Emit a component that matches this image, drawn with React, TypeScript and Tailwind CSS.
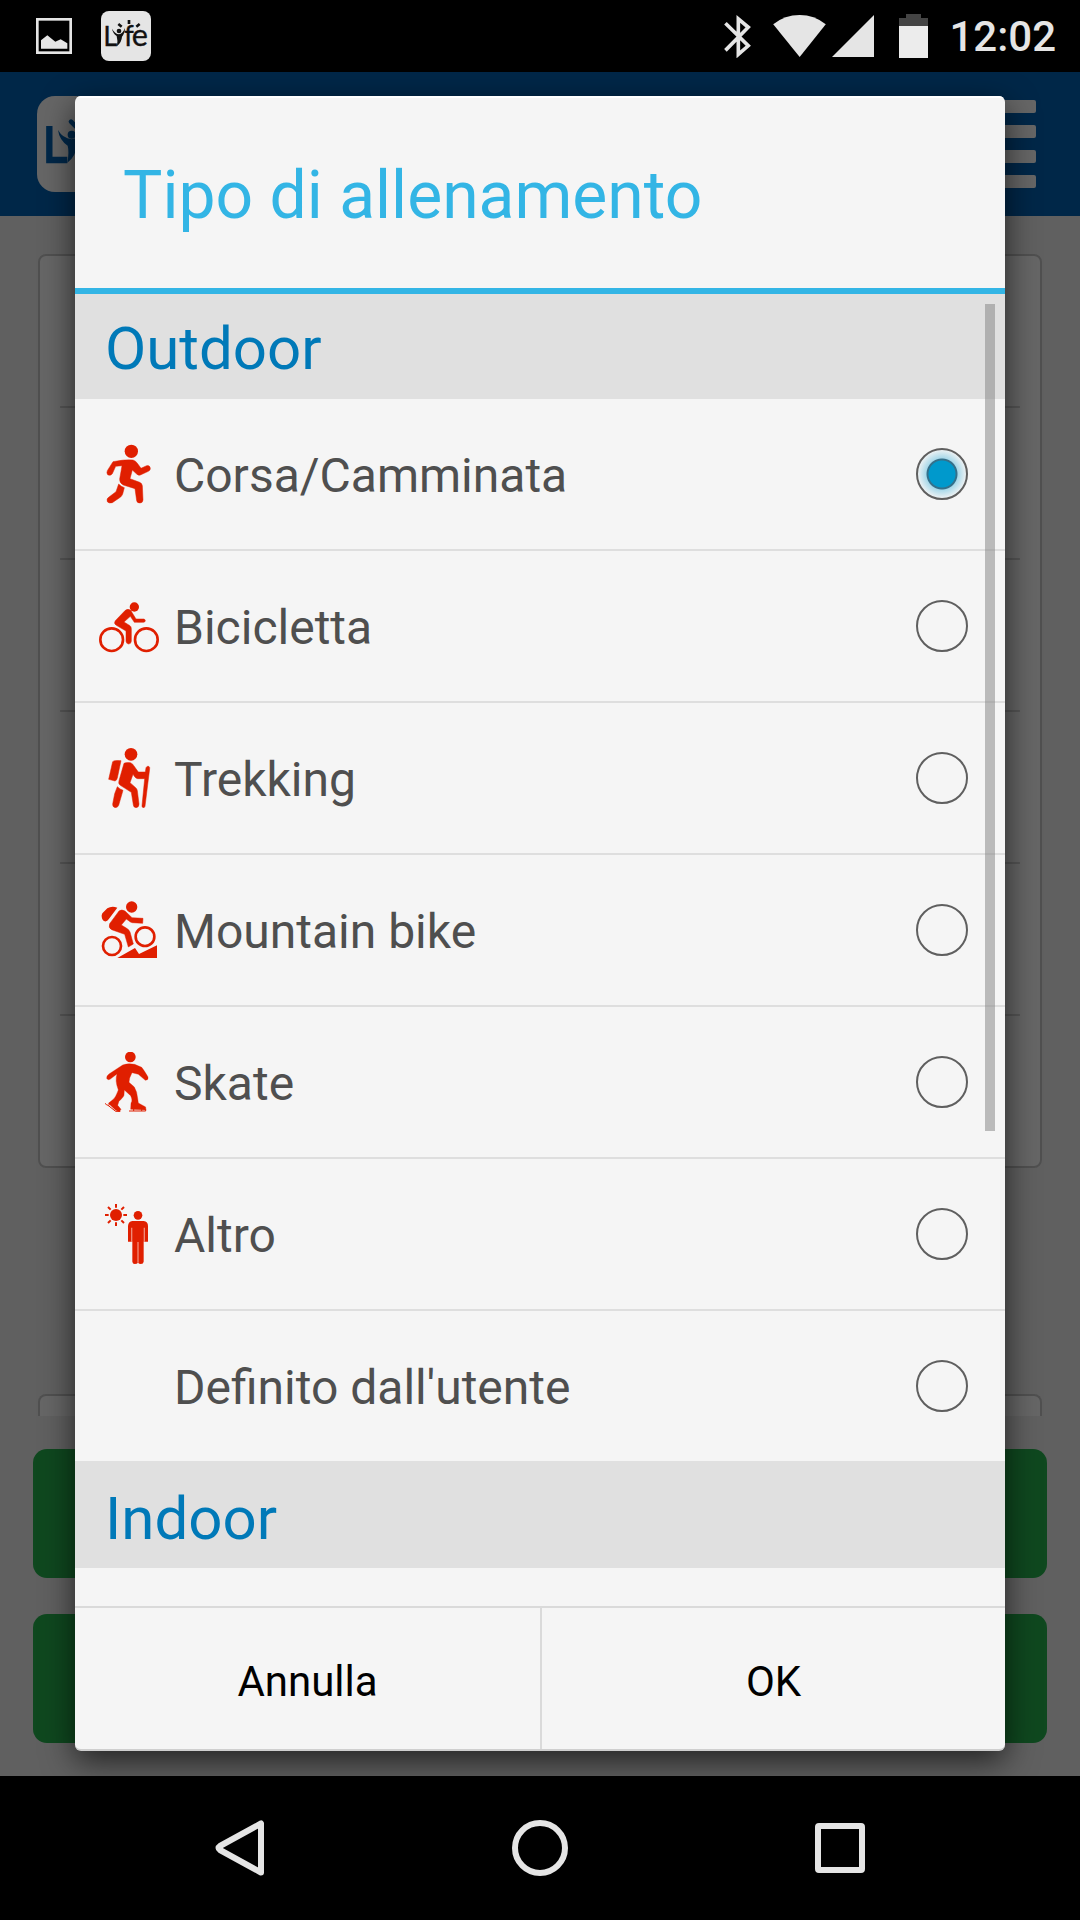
import React, { useState } from "react";

const RED = "#e01f00";

function RunIcon() {
  return (
    <svg className="size-[60px] shrink-0" viewBox="72 72 180 180" fill={RED} aria-hidden="true">
      <circle cx="169" cy="94" r="20" />
      <path d="M114 125 Q146 118 174 120 Q182 122 187 130 L198 145 L215 137 Q224 135 226 144 Q227 151 220 154 L196 165 Q190 167 185 162 L172 150 L165 176 L194 187 Q201 190 202 197 L204 240 Q203 249 195 249 Q186 249 185 242 L180 206 L145 195 Q133 189 134 177 L141 137 L122 139 L112 161 Q106 169 98 164 Q94 159 97 152 Z" stroke={RED} strokeWidth="1.500" strokeLinejoin="round" />
      <path d="M131 192 Q138 200 148 203 L143 222 Q141 227 137 231 L112 248 Q102 251 97 245 Q94 236 101 232 L123 215 Z" stroke={RED} strokeWidth="1.500" strokeLinejoin="round" />
    </svg>
  );
}

function BikeIcon() {
  return (
    <svg className="size-[60px] shrink-0" viewBox="72 528 180 180" fill={RED} aria-hidden="true">
      <circle cx="178" cy="561" r="14" />
      <circle cx="110" cy="659" r="34" fill="none" stroke={RED} strokeWidth="8" />
      <circle cx="214" cy="659" r="34" fill="none" stroke={RED} strokeWidth="8" />
      <path d="M151 571 Q159 565 167 571 L183 597 L206 597 Q211 598 211 602 Q211 606 206 607 L178 607 L166 589 L147 606 L165 617 Q169 620 169 626 L169 664 Q168 672 161 672 Q154 672 153 664 L153 633 L124 616 Q115 610 121 602 Z" stroke={RED} strokeWidth="1.500" />
    </svg>
  );
}

function TrekIcon() {
  return (
    <svg className="size-[60px] shrink-0" viewBox="72 84 180 180" fill={RED} aria-hidden="true">
      <circle cx="168" cy="103" r="19" />
      <path d="M113 125 Q118 120 138 122 L127 174 Q125 182 120 183 L101 178 Z" stroke={RED} strokeWidth="1.500" />
      <path d="M147 130 Q151 127 166 128 Q173 130 177 138 L190 156 L211 156 L213 143 Q216 137 221 139 Q225 141 224 146 L210 259 Q208 264 205 263 Q200 262 201 257 L209 176 L188 176 Q182 175 179 170 L174 163 L165 188 L182 203 Q186 206 187 212 L192 252 Q192 262 184 263 Q176 263 175 255 L169 217 L136 196 Q129 191 132 182 Z" stroke={RED} strokeWidth="1.500" />
      <path d="M127 200 Q135 208 144 211 L131 256 Q128 263 121 263 Q112 261 113 252 L119 221 Z" stroke={RED} strokeWidth="1.500" />
    </svg>
  );
}

function MountainBikeIcon() {
  return (
    <svg className="size-[60px] shrink-0" viewBox="72 540 180 180" fill={RED} aria-hidden="true">
      <circle cx="170" cy="561" r="17" />
      <circle cx="111" cy="678" r="27" fill="none" stroke={RED} strokeWidth="8" />
      <circle cx="210" cy="650" r="28" fill="none" stroke={RED} strokeWidth="8" />
      <path d="M82 580 L97 565 Q110 557 127 563 L101 598 Q97 605 89 604 Q79 600 80 586 Z" />
      <path d="M132 573 Q140 567 150 573 L171 593 L204 595 L203 610 L172 608 Q166 607 161 602 L154 597 L139 615 L155 625 Q162 629 165 636 L175 672 L160 681 L149 643 L110 629 Q99 623 104 611 Z" stroke={RED} strokeWidth="1.500" />
      <path d="M127 714 L180 684 L192 702 L246 676 L246 714 Z" />
    </svg>
  );
}

function SkateIcon() {
  return (
    <svg className="size-[60px] shrink-0" viewBox="72 66 180 180" fill={RED} aria-hidden="true">
      <circle cx="166" cy="81" r="16" />
      <path d="M143 105 Q160 98 179 103 L200 112 Q206 119 219 141 Q221 151 211 151 L190 133 L171 128 Q162 144 162 157 L178 171 Q187 186 188 205 L190 219 L212 231 L212 240 L167 238 L168 219 Q174 212 167 197 L148 180 L147 196 Q145 202 132 214 L128 226 L138 238 L133 245 L122 241 L100 220 L115 208 Q122 202 130 180 Q119 152 126 132 L105 148 Q98 152 95 145 Q94 137 102 132 Z" stroke={RED} strokeWidth="1" />
      <path d="M90 220 Q93 224 99 226 L122 244 L136 244 M162 243 L212 243 L212 236 M176 237 V243 M200 237 V243 M103 222 L101 227" fill="none" stroke={RED} strokeWidth="3" />
    </svg>
  );
}

function OtherIcon() {
  return (
    <svg className="size-[60px] shrink-0" viewBox="72 522 180 180" fill={RED} aria-hidden="true">
      <circle cx="123" cy="555" r="18" />
      <path d="M123 522V533M123 577V588M90 555H101M145 555H156M99 531L107 539M139 571L147 579M147 531L139 539M107 571L99 579" stroke={RED} strokeWidth="6" />
      <circle cx="189" cy="556" r="13" />
      <path d="M172 573 H206 Q219 574 219 588 V635 H206 V695 Q205 702 198 702 Q192 702 189 698 Q186 702 179 702 Q173 702 172 695 V635 H159 V588 Q160 574 172 573 Z" />
      <path d="M170 593V636M208 593V636M189 636V698" stroke="#f08a78" strokeWidth="4" />
    </svg>
  );
}

const SPORTS: { id: string; label: string; icon: React.ReactNode }[] = [
  { id: "run", label: "Corsa/Camminata", icon: <RunIcon /> },
  { id: "bike", label: "Bicicletta", icon: <BikeIcon /> },
  { id: "trek", label: "Trekking", icon: <TrekIcon /> },
  { id: "mtb", label: "Mountain bike", icon: <MountainBikeIcon /> },
  { id: "skate", label: "Skate", icon: <SkateIcon /> },
  { id: "other", label: "Altro", icon: <OtherIcon /> },
  { id: "custom", label: "Definito dall'utente", icon: <span className="size-[60px] shrink-0" /> },
];

function StatusBar() {
  return (
    <div className="flex h-[72px] shrink-0 items-center bg-black pr-6 pl-9 text-[#e5e5e5]">
      <svg className="size-9" viewBox="0 0 108 108" aria-hidden="true">
        <rect x="4" y="4" width="100" height="100" fill="none" stroke="#e5e5e5" strokeWidth="8" />
        <path d="M15 92 V67 L34 52 L58 71 L74 64 L94 76 V92 Z" fill="#e5e5e5" />
      </svg>
      <svg className="ml-[29px] size-[50px]" viewBox="303 33 150 150" role="img" aria-label="Lyfe">
        <rect x="303" y="33" width="150" height="150" rx="24" fill="#e5e5e5" />
        <g fill="#111" stroke="#111" strokeWidth="1" fontFamily="Lato, sans-serif">
          <text x="310" y="138" fontSize="82">L</text>
          <text x="372" y="138" fontSize="84">f</text>
          <text x="395" y="138" fontSize="92">e</text>
        </g>
        <circle cx="357" cy="93" r="7" fill="#111" />
        <path d="M336 86 Q345 102 357 103 Q368 101 375 84 Q374 101 366 110 Q365 127 351 138 Q354 122 350 108 Q339 101 336 86 Z" fill="#111" />
        <path d="M355 72L365 80M387 60V72M419 72L409 80" stroke="#111" strokeWidth="8" />
      </svg>
      <div className="ml-auto flex items-center">
        <svg className="h-[43px] w-[27px]" viewBox="71 44 81 130" aria-hidden="true">
          <path d="M75 69 L144 137 L114 163 V56 L144 81 L75 151" fill="none" stroke="#e5e5e5" strokeWidth="11" />
        </svg>
        <svg className="ml-[22px] h-[42px] w-[53px]" viewBox="219 43 159 127" aria-hidden="true">
          <path d="M219 71 Q254 43 299 43 Q343 43 378 71 L299 170 Z" fill="#e5e5e5" />
        </svg>
        <svg className="ml-1.5 h-[42px] w-[42px]" viewBox="0 0 42 42" aria-hidden="true">
          <path d="M42 0 V42 H0 Z" fill="#e5e5e5" />
        </svg>
        <svg className="ml-[25px] h-[44px] w-[29px]" viewBox="0 0 29 44" aria-hidden="true">
          <path d="M7 0 H22 V4 H29 V12 H0 V4 H7 Z" fill="#444" />
          <path d="M0 12 H29 V44 H0 Z" fill="#ececec" />
        </svg>
        <span className="ml-[21px] pt-0.5 text-[42px] leading-[48px] font-medium">12:02</span>
      </div>
    </div>
  );
}

function PageBehind() {
  return (
    <div className="flex flex-1 flex-col bg-[#f0f0f0]">
      <header className="flex h-36 items-center justify-between bg-[#0062b4] px-[37px]">
        <svg className="size-24" viewBox="111 288 288 288" role="img" aria-label="Lyfe">
          <rect x="111" y="288" width="288" height="288" rx="54" fill="#fff" />
          <path d="M148 378V480H202" fill="none" stroke="#0062b4" strokeWidth="19" />
          <circle cx="215" cy="404" r="12" fill="#0062b4" />
          <path d="M174 390 Q188 415 215 418 Q240 414 250 390 Q248 420 230 436 Q228 470 202 488 Q208 455 203 437 Q178 420 174 390 Z" fill="#0062b4" />
          <path d="M213 365L228 380" stroke="#0062b4" strokeWidth="14" strokeLinecap="round" />
        </svg>
        <button type="button" aria-label="Menu" className="mr-[7px] flex w-[88px] flex-col gap-3">
          <span className="h-[13px] rounded-xs bg-white" />
          <span className="h-[13px] rounded-xs bg-white" />
          <span className="h-[13px] rounded-xs bg-white" />
          <span className="h-[13px] rounded-xs bg-white" />
        </button>
      </header>
      <div className="mx-[38px] mt-[38px] flex h-[914px] flex-col rounded-lg border-2 border-[#c8c8c8] bg-white px-5">
        {[0, 1, 2, 3, 4].map((n) => (
          <div key={n} className="h-[152px] border-b-2 border-[#d8d8d8]" />
        ))}
      </div>
      <div className="mx-[38px] mt-[226px] h-[22px] rounded-t-lg border-2 border-b-0 border-[#c8c8c8] bg-white" />
      <div className="mt-[33px] mb-[33px] flex flex-col gap-9 px-[33px]">
        <button type="button" aria-label="Inizia" className="h-[129px] rounded-[14px] bg-[#26b44e]" />
        <button type="button" aria-label="Indietro" className="h-[129px] rounded-[14px] bg-[#26b44e]" />
      </div>
    </div>
  );
}

function NavBar() {
  return (
    <nav className="grid h-36 shrink-0 grid-cols-3 place-items-center bg-black px-[90px]">
      <button type="button" aria-label="Back">
        <svg className="size-14" viewBox="0 0 56 56" fill="none" stroke="#e5e5e5" strokeWidth="6" strokeLinejoin="round">
          <path d="M49 3.500 V52.500 L8 30 Q5 28 8 26 Z" />
        </svg>
      </button>
      <button type="button" aria-label="Home">
        <svg className="size-14" viewBox="0 0 56 56" fill="none" stroke="#e5e5e5" strokeWidth="6">
          <circle cx="28" cy="28" r="25" />
        </svg>
      </button>
      <button type="button" aria-label="Recents">
        <svg className="size-14" viewBox="0 0 56 56" fill="none" stroke="#e5e5e5" strokeWidth="6">
          <rect x="6" y="6" width="44" height="44" rx="1" />
        </svg>
      </button>
    </nav>
  );
}

export default function App() {
  const [selected, setSelected] = useState("run");

  return (
    <div className="flex min-h-screen flex-col bg-black font-['Roboto',sans-serif]">
      <StatusBar />
      <main className="relative flex flex-1 flex-col overflow-hidden">
        <PageBehind />
        <div className="absolute inset-0 flex bg-black/60 px-[75px] pt-6 pb-[25px]">
          <div
            role="dialog"
            aria-labelledby="dialog-title"
            className="flex flex-1 flex-col overflow-hidden rounded-md border-b-2 border-[#cfcfcf] bg-[#f5f5f5] shadow-[0_10px_32px_rgba(0,0,0,0.65)]"
          >
            <div className="flex h-[198px] shrink-0 items-center border-t-2 border-b-6 border-t-white border-b-[#33b5e5] px-12">
              <h1 id="dialog-title" className="pt-1.5 text-[66px] leading-[78px] text-[#33b5e5]">
                Tipo di allenamento
              </h1>
            </div>
            <div className="relative flex-1 overflow-hidden">
              <h2 className="flex h-[105px] items-center bg-[#e0e0e0] px-[30px] pt-1 text-[60px] leading-[70px] text-[#0079b8]">
                Outdoor
              </h2>
              <div role="radiogroup" aria-label="Outdoor">
                {SPORTS.map((sport) => (
                  <label
                    key={sport.id}
                    className="flex h-[152px] items-center border-b-2 border-[#dedede] pr-[37px] pl-6 text-[#4f4f4f] last:h-[150px] last:border-b-0"
                  >
                    {sport.icon}
                    <span className="ml-[15px] flex-1 pt-1 text-[48px] leading-[56px]">{sport.label}</span>
                    <input
                      type="radio"
                      name="sport"
                      value={sport.id}
                      checked={selected === sport.id}
                      onChange={() => setSelected(sport.id)}
                      className="size-[52px] appearance-none rounded-full border-2 border-[#5f5f5f] checked:bg-[radial-gradient(circle,#0099cc_13px,#35708a_14px,#35708a_15px,#a9d9ea_16px,#f4f4f4_25px)]"
                    />
                  </label>
                ))}
              </div>
              <h2 className="flex h-[107px] items-center bg-[#e0e0e0] px-[30px] pt-2 text-[60px] leading-[70px] text-[#0079b8]">
                Indoor
              </h2>
              <div className="absolute top-2.5 right-2.5 h-[63%] w-2.5 bg-[#808080]/50" />
            </div>
            <div className="grid h-[143px] shrink-0 grid-cols-2 border-t-2 border-[#dadada] text-[42px] leading-[50px] text-black">
              <button type="button" className="pt-1.5">
                Annulla
              </button>
              <button type="button" className="border-l-2 border-[#dadada] pt-1.5">
                OK
              </button>
            </div>
          </div>
        </div>
      </main>
      <NavBar />
    </div>
  );
}
